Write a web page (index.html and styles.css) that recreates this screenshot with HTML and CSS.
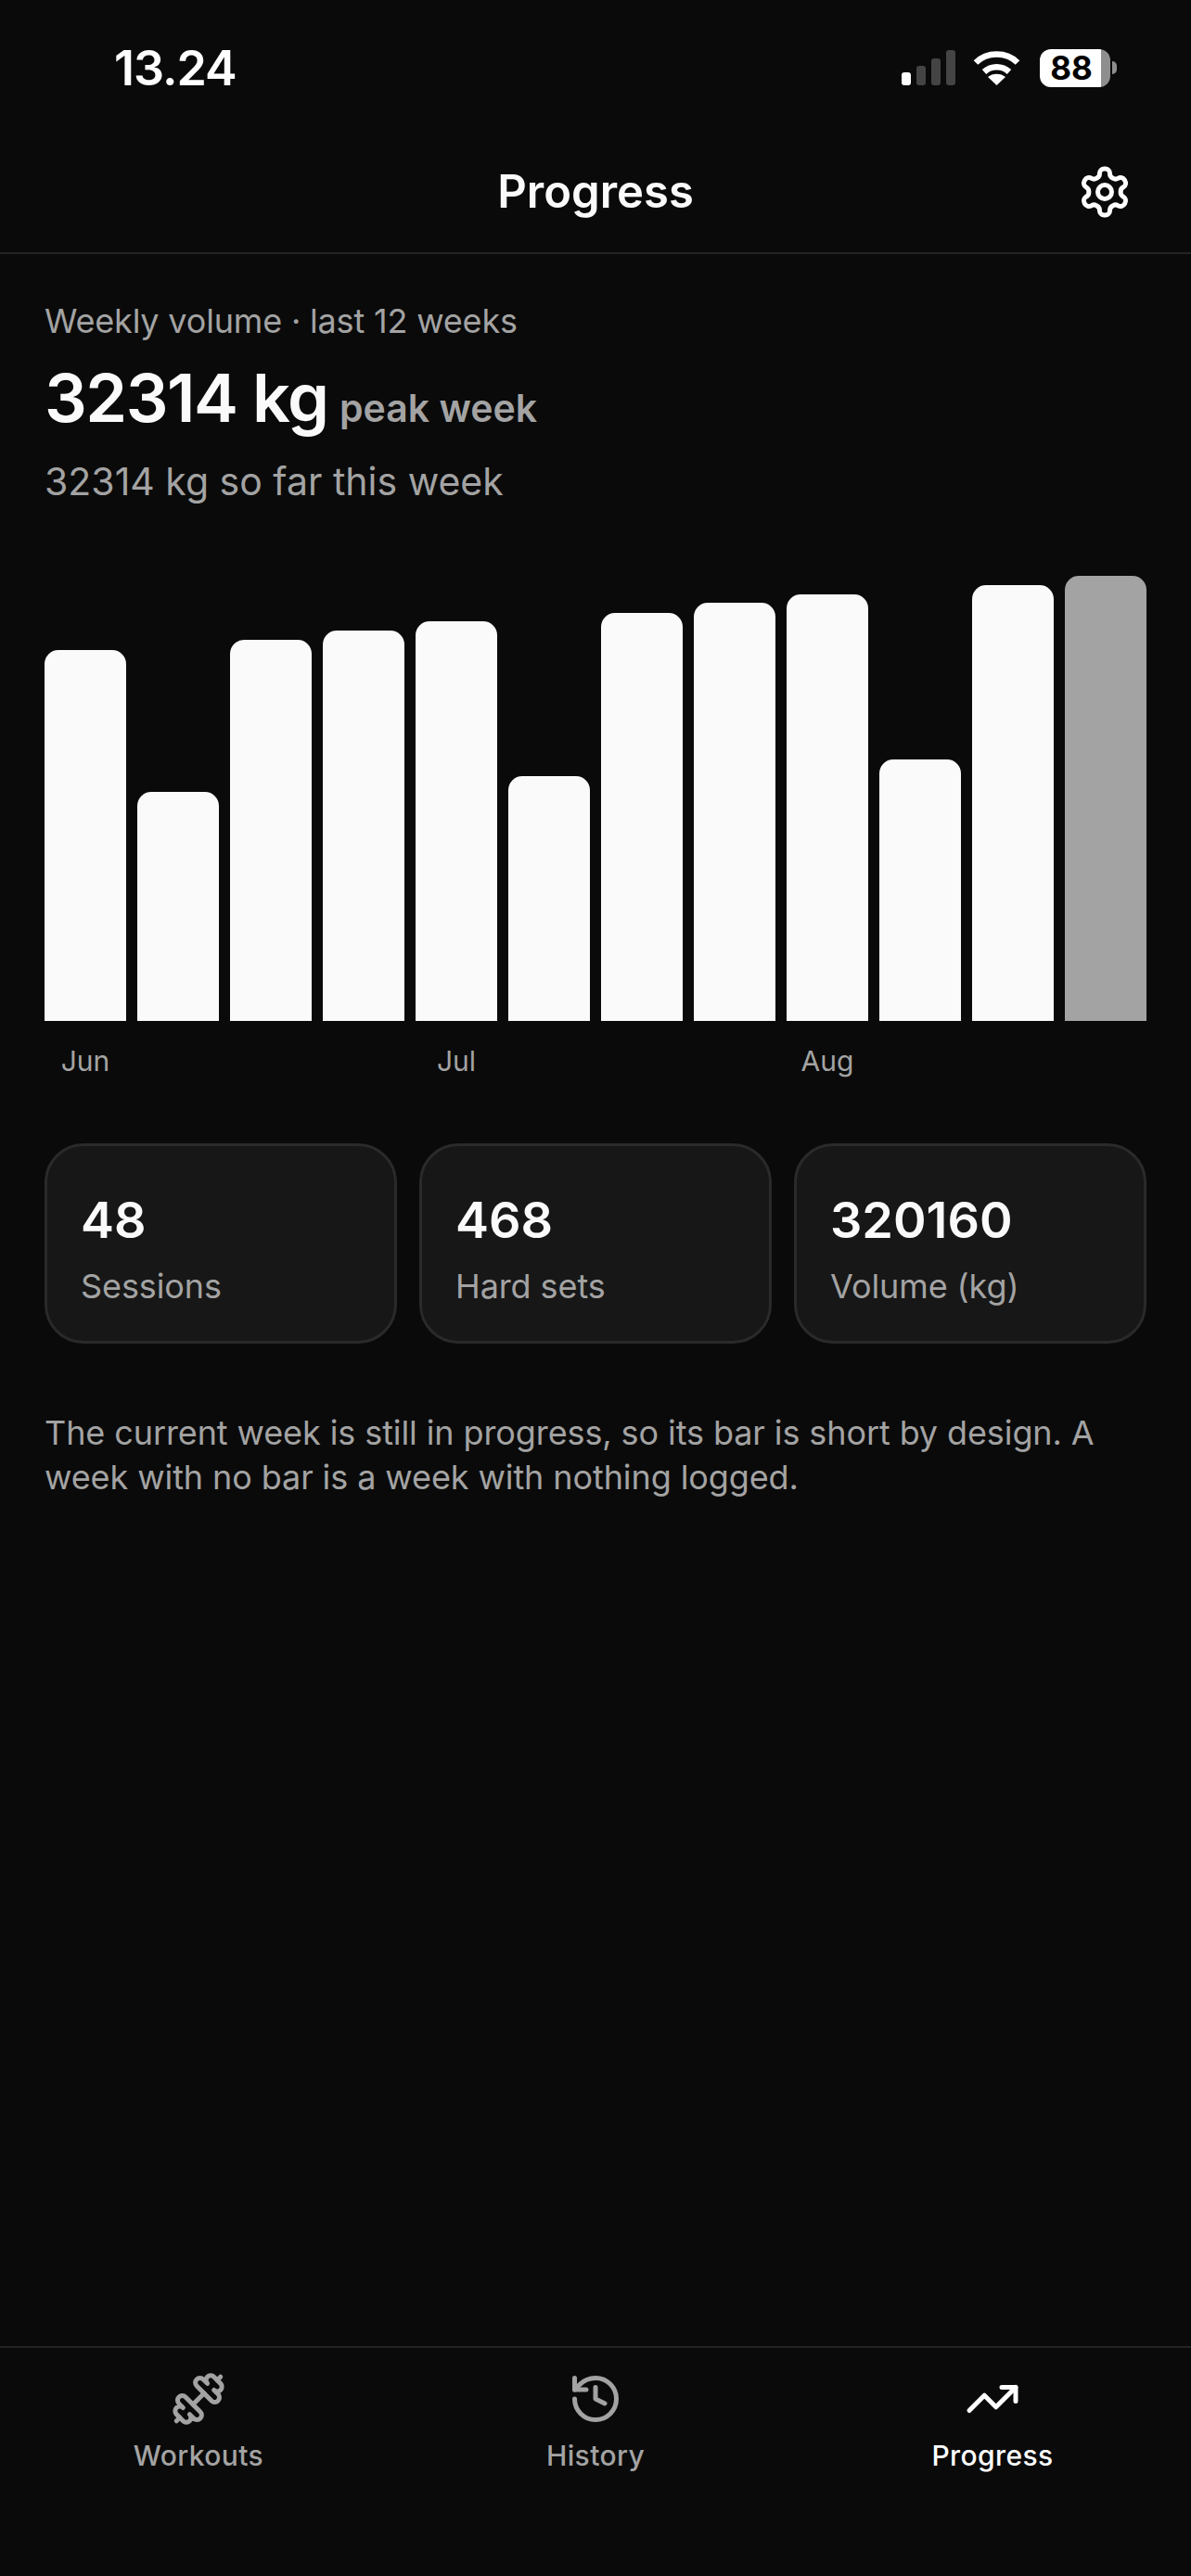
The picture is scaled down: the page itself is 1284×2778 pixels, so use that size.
FILE: index.html
```html
<!DOCTYPE html>
<html>

<head>
    <meta charset="UTF-8">
    <meta name="viewport" content="width=device-width, initial-scale=1.0">
    <title>Progress</title>
    <link rel="stylesheet" href="styles.css">
</head>

<body>
    <div class="app">
        <!-- Status bar -->
        <div class="status-bar">
            <span class="time">13.24</span>
            <div class="status-icons">
                <div class="signal">
                    <span class="signal-bar on s1"></span>
                    <span class="signal-bar s2"></span>
                    <span class="signal-bar s3"></span>
                    <span class="signal-bar s4"></span>
                </div>
                <svg class="wifi" viewBox="0 0 51 38" fill="none" stroke="#fff" stroke-width="6.5">
                    <path d="M3 13.5C15 1.5 36 1.5 48 13.5" />
                    <path d="M12 23.5C19.500 16.500 31.500 16.500 39 23.500" />
                    <path d="M25.500 38L16 29C21 24.500 30 24.500 35 29Z" fill="#fff" stroke="none" />
                </svg>
                <div class="battery"><span>88</span></div>
                <span class="battery-nub"></span>
            </div>
        </div>

        <!-- Header -->
        <header class="header">
            <h1>Progress</h1>
            <svg class="icon gear" viewBox="0 0 24 24">
                <path d="M12.22 2h-.44a2 2 0 0 0-2 2v.18a2 2 0 0 1-1 1.730l-.43.250a2 2 0 0 1-2 0l-.15-.08a2 2 0 0 0-2.730.730l-.22.380a2 2 0 0 0 .730 2.730l.15.100a2 2 0 0 1 1 1.720v.510a2 2 0 0 1-1 1.740l-.15.090a2 2 0 0 0-.730 2.730l.22.380a2 2 0 0 0 2.730.730l.15-.08a2 2 0 0 1 2 0l.43.250a2 2 0 0 1 1 1.730V20a2 2 0 0 0 2 2h.44a2 2 0 0 0 2-2v-.18a2 2 0 0 1 1-1.730l.43-.25a2 2 0 0 1 2 0l.15.080a2 2 0 0 0 2.730-.730l.22-.39a2 2 0 0 0-.730-2.730l-.15-.08a2 2 0 0 1-1-1.740v-.5a2 2 0 0 1 1-1.740l.15-.09a2 2 0 0 0 .730-2.730l-.22-.38a2 2 0 0 0-2.730-.730l-.15.080a2 2 0 0 1-2 0l-.43-.25a2 2 0 0 1-1-1.730V4a2 2 0 0 0-2-2z" />
                <circle cx="12" cy="12" r="3" />
            </svg>
        </header>

        <main class="content">
            <div class="eyebrow">Weekly volume · last 12 weeks</div>
            <div class="peak"><span class="peak-value">32314 kg</span> <span class="peak-label">peak week</span></div>
            <div class="so-far">32314 kg so far this week</div>

            <!-- Chart -->
            <div class="chart">
                <div class="bar" style="height: 400px"></div>
                <div class="bar" style="height: 247px"></div>
                <div class="bar" style="height: 411px"></div>
                <div class="bar" style="height: 421px"></div>
                <div class="bar" style="height: 431px"></div>
                <div class="bar" style="height: 264px"></div>
                <div class="bar" style="height: 440px"></div>
                <div class="bar" style="height: 451px"></div>
                <div class="bar" style="height: 460px"></div>
                <div class="bar" style="height: 282px"></div>
                <div class="bar" style="height: 470px"></div>
                <div class="bar current" style="height: 480px"></div>
            </div>
            <div class="months">
                <span>Jun</span><span></span><span></span><span></span>
                <span>Jul</span><span></span><span></span><span></span>
                <span>Aug</span><span></span><span></span><span></span>
            </div>

            <!-- Stats -->
            <div class="stats">
                <div class="card">
                    <div class="card-value">48</div>
                    <div class="card-label">Sessions</div>
                </div>
                <div class="card">
                    <div class="card-value">468</div>
                    <div class="card-label">Hard sets</div>
                </div>
                <div class="card">
                    <div class="card-value">320160</div>
                    <div class="card-label">Volume (kg)</div>
                </div>
            </div>

            <p class="note">The current week is still in progress, so its bar is short by design. A week with no bar is a week with nothing logged.</p>
        </main>

        <!-- Tab bar -->
        <nav class="tabs">
            <div class="tab">
                <svg class="icon flip" viewBox="0 0 24 24">
                    <path d="M14.4 14.4 9.6 9.6" />
                    <path d="M18.657 21.485a2 2 0 1 1-2.829-2.828l-1.767 1.768a2 2 0 1 1-2.829-2.829l6.364-6.364a2 2 0 1 1 2.829 2.829l-1.768 1.767a2 2 0 1 1 2.828 2.829z" />
                    <path d="m21.5 21.5-1.4-1.4" />
                    <path d="M3.9 3.9 2.5 2.500" />
                    <path d="M6.404 12.768a2 2 0 1 1-2.829-2.829l1.768-1.767a2 2 0 1 1-2.828-2.829l2.828-2.828a2 2 0 1 1 2.829 2.828l1.767-1.768a2 2 0 1 1 2.829 2.829z" />
                </svg>
                <span>Workouts</span>
            </div>
            <div class="tab">
                <svg class="icon" viewBox="0 0 24 24">
                    <path d="M3 12a9 9 0 1 0 9-9 9.750 9.750 0 0 0-6.740 2.740L3 8" />
                    <path d="M3 3v5h5" />
                    <path d="M12 7v5l4 2" />
                </svg>
                <span>History</span>
            </div>
            <div class="tab active">
                <svg class="icon" viewBox="0 0 24 24">
                    <polyline points="22 7 13.500 15.500 8.500 10.500 2 17" />
                    <polyline points="16 7 22 7 22 13" />
                </svg>
                <span>Progress</span>
            </div>
        </nav>
    </div>
</body>

</html>
```

FILE: styles.css
```css
* {
    box-sizing: border-box;
}

body {
    margin: 0;
    background-color: #0a0a0a;
    color: #fafafa;
    font-family: 'Inter', sans-serif;
}

.app {
    display: flex;
    flex-direction: column;
    height: 2778px;
}

.status-bar {
    display: flex;
    justify-content: space-between;
    align-items: center;
    height: 146px;
    padding: 0 80px 0 123px;
}

.time {
    font-size: 52px;
    font-weight: 600;
    color: #fff;
    letter-spacing: -1px;
}

.status-icons {
    display: flex;
    align-items: center;
}

.signal {
    display: flex;
    align-items: flex-end;
    gap: 6px;
    height: 38px;
    margin-right: 19px;
}

.signal-bar {
    width: 10px;
    border-radius: 3px;
    background-color: #444;
}

.signal-bar.on {
    background-color: #fff;
}

.s1 { height: 14px; }
.s2 { height: 21px; }
.s3 { height: 29px; }
.s4 { height: 38px; }

.wifi {
    width: 51px;
    height: 38px;
    margin-right: 21px;
}

.battery {
    display: flex;
    align-items: center;
    justify-content: center;
    width: 76px;
    height: 41px;
    padding-right: 8px;
    border-radius: 12px;
    background: linear-gradient(to right, #fff 87%, #8e8e8e 87%);
    color: #000;
    font-size: 35px;
    font-weight: 700;
}

.battery-nub {
    width: 5px;
    height: 14px;
    margin-left: 2px;
    border-radius: 0 5px 5px 0;
    background-color: #8e8e8e;
}

.header {
    position: relative;
    display: flex;
    align-items: center;
    justify-content: center;
    height: 128px;
    padding-bottom: 5px;
    border-bottom: 2px solid #232323;
}

.header h1 {
    margin: 0;
    font-size: 49px;
    font-weight: 600;
}

.icon {
    width: 60px;
    height: 60px;
    fill: none;
    stroke: currentColor;
    stroke-width: 2;
    stroke-linecap: round;
    stroke-linejoin: round;
}

.flip {
    transform: scaleX(-1);
}

.gear {
    position: absolute;
    right: 63px;
    top: 31px;
    color: #fff;
}

.content {
    flex: 1;
    padding: 50px 48px 0;
}

.eyebrow {
    font-size: 36px;
    line-height: 44px;
    letter-spacing: -0.18px;
    color: #a3a3a3;
}

.peak {
    margin-top: 18px;
    line-height: 86px;
}

.peak-value {
    font-size: 72px;
    font-weight: 600;
    letter-spacing: -1.5px;
}

.peak-label {
    font-size: 41px;
    font-weight: 600;
    color: #a3a3a3;
    margin-left: 8px;
}

.so-far {
    margin-top: 1px;
    font-size: 41px;
    line-height: 52px;
    color: #a3a3a3;
}

.chart {
    display: grid;
    grid-template-columns: repeat(12, 1fr);
    gap: 12px;
    align-items: end;
    height: 480px;
    margin-top: 76px;
}

.bar {
    border-radius: 15px 15px 0 0;
    background-color: #fafafa;
}

.bar.current {
    background-color: #a3a3a3;
}

.months {
    display: grid;
    grid-template-columns: repeat(12, 1fr);
    gap: 12px;
    margin-top: 25px;
    font-size: 30px;
    line-height: 36px;
    color: #a3a3a3;
    text-align: center;
    white-space: nowrap;
}

.stats {
    display: grid;
    grid-template-columns: repeat(3, 1fr);
    gap: 24px;
    margin-top: 71px;
}

.card {
    height: 216px;
    padding: 48px 36px 0;
    border: 3px solid #2a2a2a;
    border-radius: 42px;
    background-color: #171717;
}

.card-value {
    font-size: 54px;
    font-weight: 600;
    line-height: 64px;
}

.card-label {
    margin-top: 17px;
    font-size: 36px;
    line-height: 44px;
    letter-spacing: -0.1px;
    color: #a3a3a3;
}

.note {
    margin: 72px 0 0;
    font-size: 36px;
    line-height: 48px;
    letter-spacing: -0.1px;
    color: #a3a3a3;
}

.tabs {
    display: grid;
    grid-template-columns: repeat(3, 1fr);
    height: 248px;
    padding-top: 25px;
    border-top: 2px solid #232323;
}

.tab {
    display: flex;
    flex-direction: column;
    align-items: center;
    gap: 11px;
    font-size: 30px;
    font-weight: 500;
    line-height: 40px;
    letter-spacing: 0.4px;
    color: #a3a3a3;
}

.tab.active {
    color: #fff;
}
```
